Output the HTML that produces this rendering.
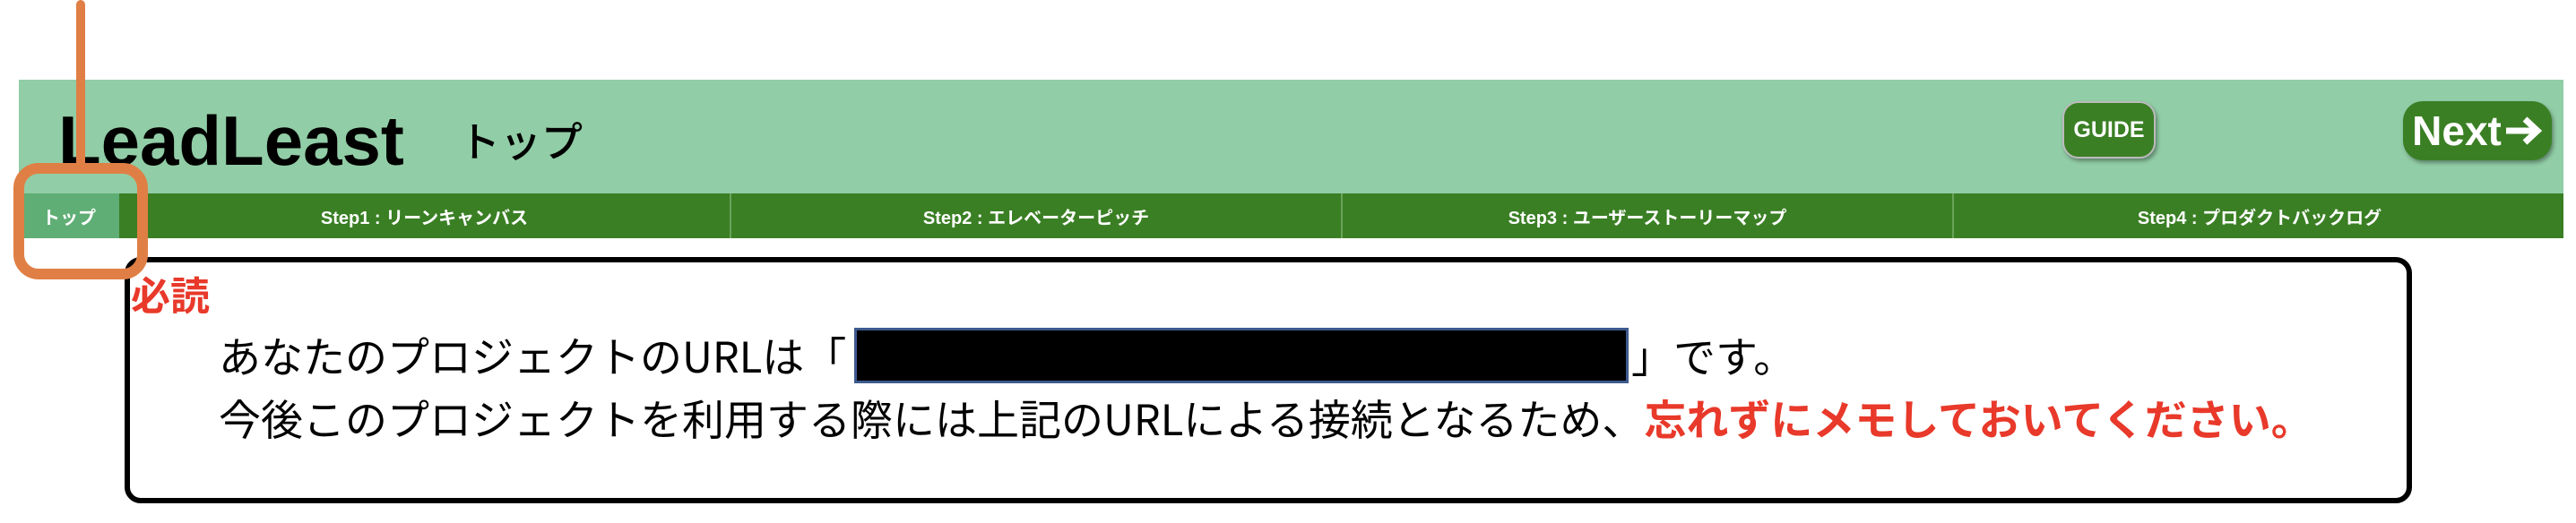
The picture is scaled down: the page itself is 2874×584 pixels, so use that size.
<!DOCTYPE html>
<html><head><meta charset="utf-8"><style>
body{margin:0;width:2874px;height:584px;background:#fff;position:relative;overflow:hidden;font-family:"Liberation Sans","Noto Sans CJK JP",sans-serif}
.hdr{position:absolute;left:21px;top:89px;width:2839px;height:127px;background:#91cda6}
.logo{position:absolute;left:65px;top:112px;font-size:78px;font-weight:bold;line-height:90px;letter-spacing:0px}
.ttl{position:absolute;left:512px;top:128px;font-size:46px;line-height:56px;font-family:"Noto Sans CJK JP",sans-serif;font-weight:500}
.btn{position:absolute;background:#3a7f24;color:#fff;font-weight:bold;display:flex;align-items:center;justify-content:center;box-shadow:2px 3px 4px rgba(0,0,0,.35)}
.nav{position:absolute;left:21px;top:216px;width:2839px;height:50px;background:#3a7f24}
.tab{position:absolute;top:0;height:50px;display:flex;align-items:center;justify-content:center;color:#fff;font-weight:bold;font-size:20px;font-family:"Liberation Sans","Noto Sans CJK JP",sans-serif}
.sep{border-left:2px solid #6aa35a}
.card{position:absolute;left:139px;top:287px;width:2540px;height:263px;border:6px solid #000;border-radius:18px}
.t{position:absolute;font-size:47px;line-height:56px;white-space:nowrap;font-family:"Noto Sans CJK JP",sans-serif;font-weight:400}
.red{color:#e8392a;font-weight:bold}
</style></head><body>
<div class="hdr"></div>
<div class="logo">LeadLeast</div>
<div class="ttl">トップ</div>
<div class="btn" style="left:2301px;top:113px;width:100px;height:60px;border:2px solid #bbb;border-radius:18px;font-size:25px">GUIDE</div>
<div class="btn" style="left:2681px;top:113px;width:166px;height:66px;border-radius:22px;font-size:46px">Next<svg width="44" height="36" viewBox="0 0 44 36" style="margin-left:2px"><path d="M3 18H38M24 5L38 18L24 31" stroke="#fff" stroke-width="7" fill="none" stroke-linejoin="miter"/></svg></div>
<div class="nav">
<div class="tab" style="left:0;width:112px;background:#5fae75">トップ</div>
<div class="tab" style="left:112px;width:681px">Step1 : リーンキャンバス</div>
<div class="tab sep" style="left:793px;width:680px">Step2 : エレベーターピッチ</div>
<div class="tab sep" style="left:1475px;width:680px">Step3 : ユーザーストーリーマップ</div>
<div class="tab sep" style="left:2157px;width:682px">Step4 : プロダクトバックログ</div>
</div>
<div class="card"></div>
<div class="t red" style="left:146px;top:299px;font-size:44px">必読</div>
<div class="t" style="left:244px;top:368px">あなたのプロジェクトのURLは「</div>
<div style="position:absolute;left:953px;top:366px;width:858px;height:56px;background:#000;border:3px solid #3d5a8f"></div>
<div class="t" style="left:1820px;top:368px">」です。</div>
<div class="t" style="left:244px;top:438px">今後このプロジェクトを利用する際には上記のURLによる接続となるため、<span class="red">忘れずにメモしておいてください。</span></div>
<div style="position:absolute;left:85px;top:0;width:10px;height:190px;background:#e07f45;border-radius:5px"></div>
<div style="position:absolute;left:15px;top:182px;width:126px;height:106px;border:12px solid #e07f45;border-radius:28px"></div>
</body></html>
